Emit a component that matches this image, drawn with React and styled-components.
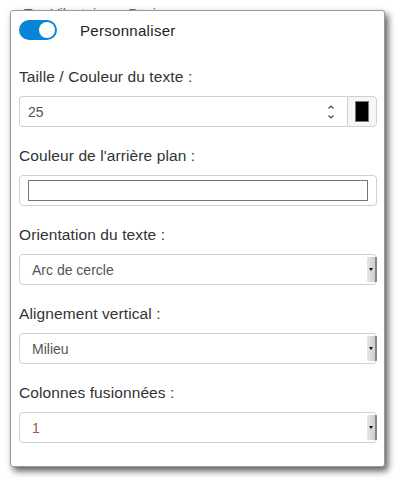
import React from 'react';
import styled, { createGlobalStyle } from 'styled-components';

const GlobalStyle = createGlobalStyle`
  html, body {
    margin: 0;
    padding: 0;
    background: #fff;
    font-family: "Liberation Sans", Arial, sans-serif;
  }
`;

const Page = styled.div`
  position: relative;
  width: 402px;
  height: 485px;
  overflow: hidden;
  background: #fff;
`;

const BackBar = styled.div`
  display: flex;
  align-items: center;
  gap: 20px;
  padding: 6px 0 0 24px;
  height: 16px;
  font-size: 14px;
  color: #666;
`;

const BackIcon = styled.span`
  margin-left: auto;
  margin-right: 32px;
  width: 8px;
  height: 8px;
  border-radius: 2px;
  background: #2c5d80;
`;

const Panel = styled.div`
  position: absolute;
  left: 10px;
  top: 10px;
  width: 375px;
  height: 457px;
  box-sizing: border-box;
  background: #fff;
  border: 1px solid #9a9a9a;
  border-radius: 3px;
  box-shadow: 3px 4px 7px rgba(0, 0, 0, 0.65);
  padding: 9px 8px 0 8px;
`;

const Header = styled.div`
  display: flex;
  align-items: center;
  gap: 23px;
  height: 20px;
`;

const Toggle = styled.span`
  position: relative;
  display: inline-block;
  width: 38px;
  height: 20px;
  border-radius: 10px;
  background: ${p => (p.on ? '#0a84d9' : '#ccc')};

  &::after {
    content: '';
    position: absolute;
    top: 2px;
    left: ${p => (p.on ? '20px' : '2px')};
    width: 16px;
    height: 16px;
    border-radius: 50%;
    background: #fff;
  }
`;

const Title = styled.span`
  font-size: 15px;
  color: #222;
  letter-spacing: 0.3px;
`;

const Field = styled.div`
  display: flex;
  flex-direction: column;
  margin-top: ${p => p.first ? '28px' : '20px'};
`;

const Label = styled.label`
  font-size: 15.5px;
  color: #333;
  line-height: 18px;
  height: 18px;
  margin-bottom: 10px;
  letter-spacing: 0.1px;
`;

const Group = styled.div`
  display: flex;
  height: 31px;
  width: 358px;
`;

const NumberBox = styled.div`
  flex: 1;
  display: flex;
  align-items: center;
  justify-content: space-between;
  box-sizing: border-box;
  border: 1px solid #ccd1d6;
  border-right: none;
  border-radius: 4px 0 0 4px;
  padding: 0 12px 0 8px;
  font-size: 14px;
  color: #555;
`;

const Spinner = styled.svg`
  width: 8px;
  height: 18px;
`;

const Addon = styled.div`
  width: 30px;
  display: flex;
  align-items: center;
  justify-content: center;
  box-sizing: border-box;
  border: 1px solid #ccd1d6;
  border-radius: 0 4px 4px 0;
  background: #f5f6f8;
`;

const Swatch = styled.span`
  width: 12px;
  height: 19px;
  background: ${p => p.color};
  border: 1px solid #777;
`;

const ColorBox = styled.div`
  box-sizing: border-box;
  height: 31px;
  width: 358px;
  border: 1px solid #ccd1d6;
  border-radius: 4px;
  padding: 4px 8px;
`;

const ColorInner = styled.div`
  height: 21px;
  box-sizing: border-box;
  border: 1px solid #777;
  background: ${p => p.color};
`;

const Select = styled.div`
  position: relative;
  box-sizing: border-box;
  height: 31px;
  width: 358px;
  border: 1px solid #ccd1d6;
  border-radius: 4px;
  display: flex;
  align-items: center;
  padding-left: 12px;
  font-size: 14px;
  color: ${p => p.accent ? '#a65440' : '#555'};
`;

const SelectButton = styled.span`
  position: absolute;
  right: -1px;
  top: 2px;
  bottom: 2px;
  width: 8px;
  background: linear-gradient(to right, #e6e6e6, #cfcfcf);
  border-right: 2px solid #888;
  border-radius: 1px;
  display: flex;
  align-items: center;
  justify-content: center;

  &::after {
    content: '';
    border-left: 2.5px solid transparent;
    border-right: 2.5px solid transparent;
    border-top: 3px solid #111;
  }
`;

const selects = [
  { label: 'Orientation du texte :', value: 'Arc de cercle' },
  { label: 'Alignement vertical :', value: 'Milieu' },
  { label: 'Colonnes fusionnées :', value: '1', accent: true },
];

export default function App() {
  return (
    <>
      <GlobalStyle />
      <Page>
        <BackBar>
          <span>Top Vilnotaire</span>
          <span>Basic</span>
          <BackIcon />
        </BackBar>
        <Panel>
          <Header>
            <Toggle on />
            <Title>Personnaliser</Title>
          </Header>

          <Field first>
            <Label>Taille / Couleur du texte :</Label>
            <Group>
              <NumberBox>
                <span>25</span>
                <Spinner viewBox="0 0 8 18">
                  <path d="M1.5 5.5 L4 3 L6.5 5.5" fill="none" stroke="#444" strokeWidth="1.1" />
                  <path d="M1.5 12.5 L4 15 L6.5 12.5" fill="none" stroke="#444" strokeWidth="1.1" />
                </Spinner>
              </NumberBox>
              <Addon>
                <Swatch color="#000" />
              </Addon>
            </Group>
          </Field>

          <Field>
            <Label>Couleur de l'arrière plan :</Label>
            <ColorBox>
              <ColorInner color="#fff" />
            </ColorBox>
          </Field>

          {selects.map(s => (
            <Field key={s.label}>
              <Label>{s.label}</Label>
              <Select accent={s.accent}>
                {s.value}
                <SelectButton />
              </Select>
            </Field>
          ))}
        </Panel>
      </Page>
    </>
  );
}
